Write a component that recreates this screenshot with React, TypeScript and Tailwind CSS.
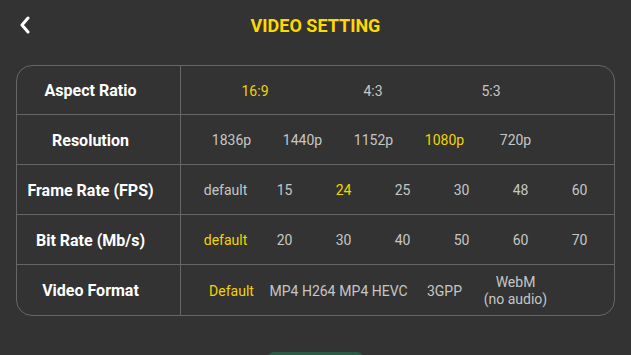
import React from "react";

type Row = {
  label: string;
  itemWidth: string;
  options: string[];
  selected: number;
};

const rows: Row[] = [
  { label: "Aspect Ratio", itemWidth: "w-[118px]", options: ["16:9", "4:3", "5:3"], selected: 0 },
  { label: "Resolution", itemWidth: "w-[71px]", options: ["1836p", "1440p", "1152p", "1080p", "720p"], selected: 3 },
  { label: "Frame Rate (FPS)", itemWidth: "w-[59px]", options: ["default", "15", "24", "25", "30", "48", "60"], selected: 2 },
  { label: "Bit Rate (Mb/s)", itemWidth: "w-[59px]", options: ["default", "20", "30", "40", "50", "60", "70"], selected: 0 },
  { label: "Video Format", itemWidth: "w-[71px]", options: ["Default", "MP4 H264", "MP4 HEVC", "3GPP", "WebM\n(no audio)"], selected: 0 },
];

export default function App() {
  return (
    <div
      className="w-[631px] h-[355px] overflow-hidden bg-[#333333] flex flex-col"
      style={{ fontFamily: "Roboto, 'Liberation Sans', sans-serif" }}
    >
      {/* header */}
      <div className="grid grid-cols-[48px_1fr_48px] items-center h-[50px] shrink-0">
        <button className="flex items-center justify-center h-full pl-[2px] pb-[1px] text-white">
          <svg width="14" height="18" viewBox="0 0 14 18" fill="none">
            <path d="M10 2 L4 9 L10 16" stroke="white" strokeWidth="3" strokeLinecap="round" strokeLinejoin="round" />
          </svg>
        </button>
        <h1 className="text-center text-[18px] font-bold text-[#ffd800]">VIDEO SETTING</h1>
        <div />
      </div>

      {/* settings table */}
      <div className="mt-[15px] mx-[16px] w-[599px] shrink-0 border border-[#666666] rounded-[16px] flex flex-col">
        {rows.map((row, i) => (
          <div
            key={row.label}
            className={`flex shrink-0 pt-[2px] ${i < rows.length - 1 ? "border-b border-[#666666]" : ""} ${i === 0 ? "h-[49px]" : "h-[50px]"}`}
          >
            <div className="w-[164px] shrink-0 border-r border-[#666666] -mt-[2px] pt-[2px] flex items-center justify-center pr-[16px] text-white font-bold text-[16px]">
              {row.label}
            </div>
            <div className="flex items-center pl-[15px]">
              {row.options.map((opt, j) => (
                <div
                  key={opt}
                  className={`${row.itemWidth} text-center text-[14px] leading-[17px] whitespace-pre-line ${
                    j === row.selected ? "text-[#f2d400]" : "text-[#c6c6c6]"
                  }`}
                >
                  {opt}
                </div>
              ))}
            </div>
          </div>
        ))}
      </div>

      {/* confirm button (partially visible) */}
      <div className="mt-[36px] flex justify-center shrink-0">
        <div className="w-[95px] h-[36px] rounded-[6px] bg-[#2e5a48]" />
      </div>
    </div>
  );
}
